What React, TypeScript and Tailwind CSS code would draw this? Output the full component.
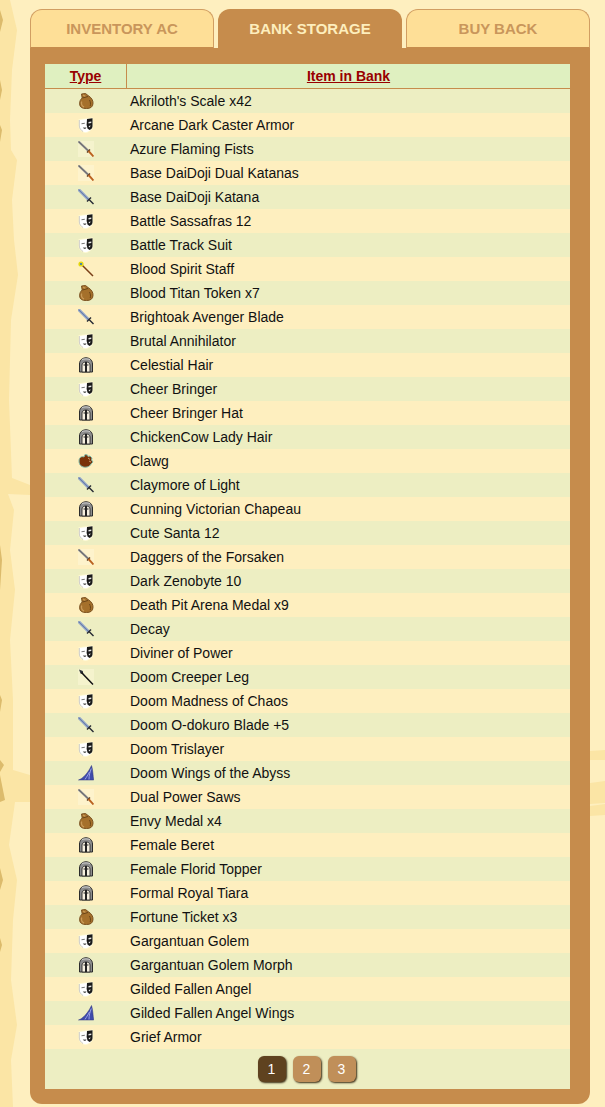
import React from "react";

type T = "bag" | "mask" | "dagger" | "sword" | "staff" | "helm" | "claw" | "spear" | "wings";

const rows: [T, string][] = [
  ["bag", "Akriloth's Scale x42"],
  ["mask", "Arcane Dark Caster Armor"],
  ["dagger", "Azure Flaming Fists"],
  ["dagger", "Base DaiDoji Dual Katanas"],
  ["sword", "Base DaiDoji Katana"],
  ["mask", "Battle Sassafras 12"],
  ["mask", "Battle Track Suit"],
  ["staff", "Blood Spirit Staff"],
  ["bag", "Blood Titan Token x7"],
  ["sword", "Brightoak Avenger Blade"],
  ["mask", "Brutal Annihilator"],
  ["helm", "Celestial Hair"],
  ["mask", "Cheer Bringer"],
  ["helm", "Cheer Bringer Hat"],
  ["helm", "ChickenCow Lady Hair"],
  ["claw", "Clawg"],
  ["sword", "Claymore of Light"],
  ["helm", "Cunning Victorian Chapeau"],
  ["mask", "Cute Santa 12"],
  ["dagger", "Daggers of the Forsaken"],
  ["mask", "Dark Zenobyte 10"],
  ["bag", "Death Pit Arena Medal x9"],
  ["sword", "Decay"],
  ["mask", "Diviner of Power"],
  ["spear", "Doom Creeper Leg"],
  ["mask", "Doom Madness of Chaos"],
  ["sword", "Doom O-dokuro Blade +5"],
  ["mask", "Doom Trislayer"],
  ["wings", "Doom Wings of the Abyss"],
  ["dagger", "Dual Power Saws"],
  ["bag", "Envy Medal x4"],
  ["helm", "Female Beret"],
  ["helm", "Female Florid Topper"],
  ["helm", "Formal Royal Tiara"],
  ["bag", "Fortune Ticket x3"],
  ["mask", "Gargantuan Golem"],
  ["helm", "Gargantuan Golem Morph"],
  ["mask", "Gilded Fallen Angel"],
  ["wings", "Gilded Fallen Angel Wings"],
  ["mask", "Grief Armor"],
];

function Icon({ t }: { t: T }) {
  const cls = "w-4 h-4 block";
  switch (t) {
    case "bag":
      return (
        <svg viewBox="0 0 16 16" className={cls}>
          <path d="M3.5 1 L7.5 0.5 L10 2.5 C13.5 4.5 15.3 7.5 15 10.5 C14.8 14 12.5 15.5 8.5 15.5 C4.5 15.5 1.8 14.5 1.7 11 C1.6 8 2.5 6.5 4.2 5 Z" fill="#a5702b" stroke="#7a5120" strokeWidth="1" />
          <path d="M3.6 8.5 C3 11 3.8 13 6 14 M5 2 L7.5 3.5" stroke="#c99a58" strokeWidth="1.4" fill="none" />
          <path d="M4.5 5 L10 3.5 M11.5 7 C12.5 9 12.8 11 12.2 13" stroke="#6b4517" strokeWidth="1" fill="none" />
        </svg>
      );
    case "mask":
      return (
        <svg viewBox="0 0 16 16" className={cls}>
          <path d="M0.8 2.5 L14.8 0.8 L14.8 9 C14.8 12.5 11 15 7.5 15.8 C4 15 0.8 12.5 0.8 9 Z" fill="#fff" stroke="#fff7c8" strokeWidth=".8" />
          <path d="M9 2 L14.5 1.2 L14.5 9 C14.5 11 13.5 12.2 11.5 13 L9.5 11.5 L8.6 8 Z" fill="#1b1b1b" />
          <path d="M3.5 6.2 L6.8 5.8 L6.8 6.8 L3.5 7.2 Z" fill="#777" />
          <path d="M4.8 10 C6 10.8 7.3 10.6 8.4 10 L7.8 11.8 L6 12 Z" fill="#555" />
          <path d="M1.3 3 L1.3 9 C1.3 11.5 3 13 5 14.5" stroke="#b5b5b5" strokeWidth=".7" fill="none" />
          <path d="M10.5 5 L13.3 4.6 L13.3 6 L10.5 6.4 Z M10.5 9 L12.8 8.6 L11.5 10.5 Z" fill="#e8e8e8" />
        </svg>
      );
    case "dagger":
      return (
        <svg viewBox="0 0 16 16" className={cls}>
          <rect width="16" height="16" fill="#fff8dc" opacity=".45" />
          <path d="M0.5 0.5 L10 9.5" stroke="#8f8f93" strokeWidth="2.2" />
          <path d="M0.5 0.5 L10 9.5" stroke="#3b3b3b" strokeWidth=".5" />
          <path d="M9 11.5 L12 8.5" stroke="#5b3a1c" strokeWidth="1.4" />
          <path d="M10.5 10 L15.5 15.5" stroke="#bb6220" strokeWidth="1.9" />
        </svg>
      );
    case "sword":
      return (
        <svg viewBox="0 0 16 16" className={cls}>
          <path d="M0.5 0.5 L10.5 10.5" stroke="#8fa3c8" strokeWidth="3" />
          <path d="M0.5 0.5 L10.5 10.5" stroke="#5c6f96" strokeWidth=".7" />
          <path d="M9 12.5 L13 8.5" stroke="#262a33" strokeWidth="1.4" />
          <path d="M11 10.5 L15.5 15" stroke="#262a33" strokeWidth="1.4" />
        </svg>
      );
    case "staff":
      return (
        <svg viewBox="0 0 16 16" className={cls}>
          <path d="M3 3 L15 15" stroke="#7a3f17" strokeWidth="1.5" />
          <circle cx="3" cy="3" r="2.6" fill="#e6d80f" />
          <circle cx="3" cy="3" r="1.1" fill="#2476c9" />
        </svg>
      );
    case "helm":
      return (
        <svg viewBox="0 0 16 16" className={cls}>
          <path d="M1.5 15 L1.5 7 C1.5 3 4.5 0.8 8 0.8 C11.5 0.8 14.5 3 14.5 7 L14.5 15 Z" fill="#8d8d8d" stroke="#2b2b2b" strokeWidth="1" />
          <path d="M4 15 L4 8 C4 6 6 5 8 5 C10 5 12 6 12 8 L12 15 Z" fill="#f7f1e0" stroke="#2b2b2b" strokeWidth=".9" />
          <path d="M8 5 L8 15" stroke="#222" strokeWidth="2" />
          <path d="M5.5 8 L10.5 8" stroke="#222" strokeWidth="1" />
          <path d="M4 2.6 C6 1.6 10 1.6 12 2.6" stroke="#d9d9d9" strokeWidth=".9" fill="none" />
        </svg>
      );
    case "claw":
      return (
        <svg viewBox="0 0 16 16" className={cls}>
          <path d="M1 8 C1 4 4 3 6 4 L7 1.5 L9.5 2 L10 3.5 L12 3 L14 5 L13.5 7 L15 9 L13 11 C12 14 7 15 4 13.5 C2 12.5 1 10.5 1 8 Z" fill="#7a3208" stroke="#7fb9a8" strokeWidth="1" />
          <path d="M10 5 L12 6.5 M11 8 L13 9" stroke="#c9a070" strokeWidth="1" />
        </svg>
      );
    case "spear":
      return (
        <svg viewBox="0 0 16 16" className={cls}>
          <rect width="16" height="16" fill="#fff8dc" opacity=".45" />
          <path d="M1 0.5 L4.8 2 L5.3 5.3 L2.5 4.5 Z" fill="#2c3038" />
          <path d="M3.5 3.5 L15 15.5" stroke="#111" strokeWidth="1.5" />
        </svg>
      );
    case "wings":
      return (
        <svg viewBox="0 0 16 16" className={cls}>
          <path d="M0.5 15 C5 13.5 10 8 13.5 0.5 C15 5 15 11 15.7 15 Z" fill="#3f4bab" stroke="#2d3480" strokeWidth=".5" />
          <path d="M11 14.5 C11 10 12 7 13.3 3.5 M7 14.5 C8.5 12 10 10 11.5 7" stroke="#9ba3e6" strokeWidth="1" fill="none" />
        </svg>
      );
  }
}

function Tab({ label, active }: { label: string; active?: boolean }) {
  return active ? (
    <div className="w-[184px] h-[39px] pt-px rounded-t-[12px] bg-[#c68c4c] text-[#fdeebd] font-bold text-[15px] flex items-center justify-center">
      {label}
    </div>
  ) : (
    <div className="w-[184px] h-[39px] pt-px rounded-t-[12px] bg-[#fedf97] border border-[#d19e62] border-b-[#c68c4c] text-[#c9965b] font-bold text-[15px] flex items-center justify-center">
      {label}
    </div>
  );
}

function PageBtn({ n, active }: { n: number; active?: boolean }) {
  return (
    <div
      className={`w-[28px] h-[26px] rounded-[6px] flex items-center justify-center text-white text-sm shadow-[1px_1px_2px_#3a2a12] ${
        active ? "bg-[#5f421f]" : "bg-[#c08f59]"
      }`}
    >
      {n}
    </div>
  );
}

export default function App() {
  return (
    <div className="relative h-[1107px] overflow-hidden bg-[#feefbf] font-['Liberation_Sans',Arial,sans-serif]">
      <svg className="absolute left-0 top-0 w-full h-full" viewBox="0 0 605 1107" preserveAspectRatio="none">
        <path d="M0 0 L10 0 L17 30 L12 70 L10 120 L11 150 L17 160 L12 200 L14 240 L18 275 L11 320 L9 400 L12 478 L30 485 L30 495 L8 494 L14 510 L10 550 L15 590 L10 640 L13 700 L13 770 L30 775 L30 802 L15 802 L9 845 L17 880 L13 920 L11 980 L17 1025 L11 1060 L13 1107 L0 1107 Z" fill="#fbe5a5" />
        <path d="M0 10 L3 20 L0 32 Z M0 80 L2 90 L0 100 Z M0 125 L2 130 L0 142 Z M0 545 L2 560 L0 590 Z M0 695 L2 700 L0 712 Z M0 760 L4 765 L0 772 Z M0 775 L5 800 L0 802 Z M0 868 L3 880 L0 890 Z M0 938 L2 945 L0 952 Z" fill="#dcbb6c" />
        <path d="M590 751 L605 750 L605 760 L590 760 Z M590 783 L605 781 L605 803 L590 804 Z M590 806 L605 804 L605 815 L590 816 Z" fill="#fbe5a5" />
      </svg>

      <div className="relative ml-[30px] w-[560px] pt-[9px]">
        <div className="flex gap-1 items-end">
          <Tab label="INVENTORY AC" />
          <Tab label="BANK STORAGE" active />
          <Tab label="BUY BACK" />
        </div>

        <div className="bg-[#c68c4c] rounded-b-[12px] pl-[15px] pr-[20px] pt-4 pb-[15px]">
          <div className="flex h-[25px] bg-[#dff0c0] border-b border-[#c68c4c] text-sm font-bold text-[#990000] underline">
            <div className="w-[82px] border-r border-[#c68c4c] flex items-center justify-center">Type</div>
            <div className="flex-1 flex items-center justify-center">Item in Bank</div>
          </div>

          {rows.map(([t, name], i) => (
            <div
              key={i}
              className={`flex h-6 items-center text-sm text-[#111] ${i % 2 === 0 ? "bg-[#edeec2]" : "bg-[#feefbf]"}`}
            >
              <div className="w-[82px] flex justify-center">
                <Icon t={t} />
              </div>
              <div className="pl-[3px]">{name}</div>
            </div>
          ))}

          <div className="h-10 bg-[#edeec2] flex items-start justify-center gap-[7px] pt-[7px] pr-[2px]">
            <PageBtn n={1} active />
            <PageBtn n={2} />
            <PageBtn n={3} />
          </div>
        </div>
      </div>
    </div>
  );
}
